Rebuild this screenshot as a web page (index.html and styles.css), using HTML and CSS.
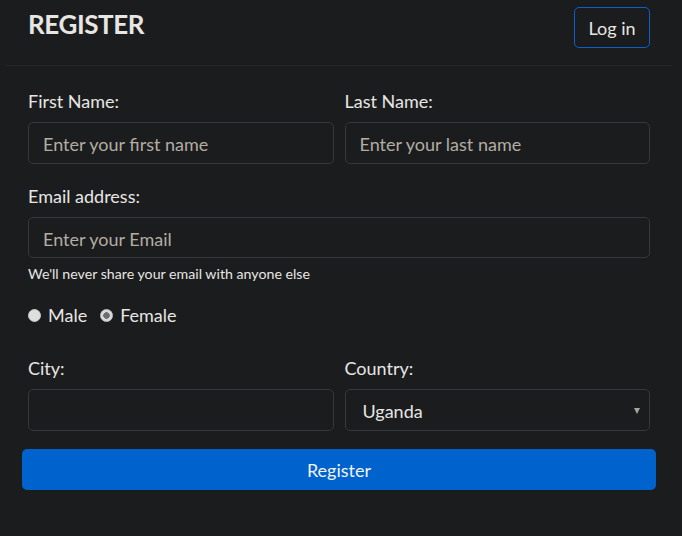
FILE: index.html
```html
<!DOCTYPE html>
<html lang="en">
<head>
<meta charset="utf-8">
<title>Register</title>
<link rel="stylesheet" href="styles.css">
</head>
<body>
<div class="card">
  <header class="head">
    <h1 class="title">REGISTER</h1>
    <button type="button" class="login">Log in</button>
  </header>
  <form class="body">
    <div class="pair">
      <div class="field">
        <label class="lbl">First Name:</label>
        <input class="ctl" type="text" placeholder="Enter your first name">
      </div>
      <div class="field">
        <label class="lbl">Last Name:</label>
        <input class="ctl" type="text" placeholder="Enter your last name">
      </div>
    </div>
    <div class="field email">
      <label class="lbl">Email address:</label>
      <input class="ctl" type="email" placeholder="Enter your Email">
      <small class="help">We'll never share your email with anyone else</small>
    </div>
    <div class="radios">
      <label class="opt"><span class="dot"></span>Male</label>
      <label class="opt"><span class="dot on"></span>Female</label>
    </div>
    <div class="pair city">
      <div class="field">
        <label class="lbl">City:</label>
        <input class="ctl" type="text">
      </div>
      <div class="field">
        <label class="lbl">Country:</label>
        <div class="ctl sel"><span>Uganda</span><span class="caret"></span></div>
      </div>
    </div>
    <button type="button" class="submit">Register</button>
  </form>
</div>
</body>
</html>
```

FILE: styles.css
```css
html, body {
  margin: 0;
  padding: 0;
  background: #1b1c1e;
  height: 100%;
}
body {
  font-family: "Lato", "Noto Sans", sans-serif;
  font-size: 18px;
  color: #e8e6e3;
}
.card {
  margin: 0 0 0 6px;
  width: 666px;
}
.head {
  display: flex;
  justify-content: space-between;
  align-items: flex-start;
  height: 65px;
  padding: 0 22px;
  border-bottom: 1px solid #25272a;
}
.title {
  margin: 8px 0 0;
  font-size: 26px;
  letter-spacing: -0.4px;
  line-height: 32px;
  font-weight: 700;
  color: #e8e6e3;
}
.login {
  margin-top: 7px;
  width: 76px;
  height: 41px;
  background: transparent;
  border: 1px solid #0b5fca;
  border-radius: 5px;
  color: #e8e6e3;
  font-family: inherit;
  font-size: 18px;
  padding: 0;
}
.body {
  padding: 20px 22px 0;
  display: flex;
  flex-direction: column;
}
.pair {
  display: grid;
  grid-template-columns: 1fr 1fr;
  column-gap: 11px;
}
.field {
  display: flex;
  flex-direction: column;
}
.lbl {
  line-height: 27px;
  padding-top: 2px;
  margin-bottom: 7px;
}
.ctl {
  box-sizing: border-box;
  height: 42px;
  width: 100%;
  background: #1b1c1e;
  border: 1px solid #35383c;
  border-radius: 5px;
  padding: 2px 14px 0;
  color: #e8e6e3;
  font-family: inherit;
  font-size: 18px;
}
.ctl::placeholder {
  color: #b3ada3;
}
.email {
  margin-top: 17px;
}
.email .ctl {
  height: 41px;
}
.help {
  margin-top: 6px;
  font-size: 14.2px;
  line-height: 20px;
}
.radios {
  display: flex;
  gap: 13px;
  margin-top: 18px;
  line-height: 27px;
}
.opt {
  display: flex;
  align-items: center;
  gap: 7px;
}
.dot {
  width: 13px;
  height: 13px;
  border-radius: 50%;
  background: #dedede;
  box-sizing: border-box;
  border: 1px solid #c8c8c8;
}
.dot.on {
  background: radial-gradient(circle, #6e6e6e 0 3px, #d9d9d9 3.5px);
}
.city {
  margin-top: 24px;
}
.sel {
  display: flex;
  align-items: center;
  justify-content: space-between;
  padding: 2px 9px 0 17px;
}
.caret {
  width: 0;
  height: 0;
  border-left: 3.5px solid transparent;
  border-right: 3.5px solid transparent;
  border-top: 6px solid #a9a59d;
}
.submit {
  margin: 18px -6px 0;
  height: 41px;
  background: #0062cc;
  border: none;
  border-radius: 5px;
  color: #f2f2f2;
  font-family: inherit;
  font-size: 18px;
}
```
